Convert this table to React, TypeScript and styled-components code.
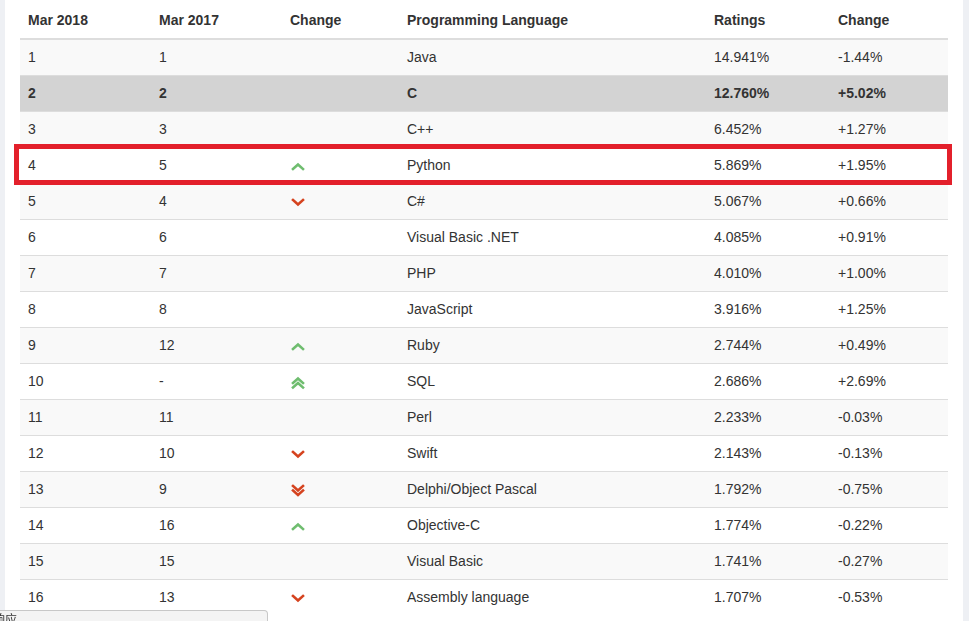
import styled, { createGlobalStyle } from 'styled-components'

const GlobalStyle = createGlobalStyle`
  html, body {
    margin: 0;
    padding: 0;
    background: #eef0f4;
    overflow: hidden;
  }
  body {
    font-family: "Liberation Sans", Arial, sans-serif;
    font-size: 14px;
    color: #333;
  }
`

type Trend = 'up' | 'up2' | 'down' | 'down2' | null

interface LangRow {
  now: string
  prev: string
  trend: Trend
  name: string
  rating: string
  change: string
}

const rows: LangRow[] = [
  { now: '1', prev: '1', trend: null, name: 'Java', rating: '14.941%', change: '-1.44%' },
  { now: '2', prev: '2', trend: null, name: 'C', rating: '12.760%', change: '+5.02%' },
  { now: '3', prev: '3', trend: null, name: 'C++', rating: '6.452%', change: '+1.27%' },
  { now: '4', prev: '5', trend: 'up', name: 'Python', rating: '5.869%', change: '+1.95%' },
  { now: '5', prev: '4', trend: 'down', name: 'C#', rating: '5.067%', change: '+0.66%' },
  { now: '6', prev: '6', trend: null, name: 'Visual Basic .NET', rating: '4.085%', change: '+0.91%' },
  { now: '7', prev: '7', trend: null, name: 'PHP', rating: '4.010%', change: '+1.00%' },
  { now: '8', prev: '8', trend: null, name: 'JavaScript', rating: '3.916%', change: '+1.25%' },
  { now: '9', prev: '12', trend: 'up', name: 'Ruby', rating: '2.744%', change: '+0.49%' },
  { now: '10', prev: '-', trend: 'up2', name: 'SQL', rating: '2.686%', change: '+2.69%' },
  { now: '11', prev: '11', trend: null, name: 'Perl', rating: '2.233%', change: '-0.03%' },
  { now: '12', prev: '10', trend: 'down', name: 'Swift', rating: '2.143%', change: '-0.13%' },
  { now: '13', prev: '9', trend: 'down2', name: 'Delphi/Object Pascal', rating: '1.792%', change: '-0.75%' },
  { now: '14', prev: '16', trend: 'up', name: 'Objective-C', rating: '1.774%', change: '-0.22%' },
  { now: '15', prev: '15', trend: null, name: 'Visual Basic', rating: '1.741%', change: '-0.27%' },
  { now: '16', prev: '13', trend: 'down', name: 'Assembly language', rating: '1.707%', change: '-0.53%' },
]

const Page = styled.div`
  display: flex;
  height: 621px;
  padding: 0 6px 0 5px;
  background: #eef0f4;
`

const Panel = styled.div`
  position: relative;
  width: 958px;
  flex: none;
  padding: 0 15px;
  box-sizing: border-box;
  background: #fff;
`

const Table = styled.table`
  width: 928px;
  border-collapse: collapse;
  border-spacing: 0;
  table-layout: fixed;
`

const Th = styled.th<{ $w: number }>`
  width: ${(p) => p.$w}px;
  box-sizing: border-box;
  padding: 10px 8px 8px;
  text-align: left;
  font-weight: bold;
  line-height: 20px;
  border-bottom: 2px solid #ddd;
  color: #333;
`

const Tr = styled.tr<{ $odd: boolean; $hl: boolean }>`
  background: ${(p) => (p.$hl ? '#d3d3d3' : p.$odd ? '#f9f9f9' : '#fff')};
  font-weight: ${(p) => (p.$hl ? 'bold' : 'normal')};
`

const Td = styled.td`
  padding: 8px;
  height: 19px;
  line-height: 19px;
  border-top: 1px solid #ddd;
  vertical-align: middle;
  color: #333;
`

const Mark = styled.div`
  position: absolute;
  left: 9px;
  top: 144px;
  width: 938px;
  height: 41px;
  box-sizing: border-box;
  border: 5px solid #e3202b;
  pointer-events: none;
`

const Status = styled.div`
  position: fixed;
  left: 0;
  bottom: -6px;
  width: 268px;
  height: 17px;
  box-sizing: border-box;
  background: #f4f4f4;
  border: 1px solid #c8c8c8;
  border-left: none;
  border-radius: 0 4px 0 0;
  font-family: "Noto Sans CJK SC", sans-serif;
  font-size: 12px;
  line-height: 15px;
  color: #333;
  overflow: hidden;
  white-space: nowrap;
  text-indent: -7px;
`

const IconWrap = styled.span`
  display: inline-flex;
  vertical-align: middle;
  margin-left: 1px;
`

const Chevron = ({ trend }: { trend: Trend }) => {
  if (!trend) return null
  const up = trend === 'up' || trend === 'up2'
  const double = trend === 'up2' || trend === 'down2'
  const color = up ? '#6fbd6f' : '#d5431f'
  const one = up ? 'M2 8 L7 3.5 L12 8' : 'M2 3 L7 7.5 L12 3'
  const two = up ? 'M2 12.5 L7 8 L12 12.5' : 'M2 7.5 L7 12 L12 7.5'
  return (
    <IconWrap>
      <svg width="14" height={double ? 15 : 11} viewBox={double ? '0 0 14 15' : '0 0 14 11'}>
        <path d={one} fill="none" stroke={color} strokeWidth="2.6" strokeLinecap="square" />
        {double && <path d={two} fill="none" stroke={color} strokeWidth="2.6" strokeLinecap="square" />}
      </svg>
    </IconWrap>
  )
}

const App = () => {
  return (
    <>
      <GlobalStyle />
      <Page>
        <Panel>
          <Table>
            <thead>
              <tr>
                <Th $w={131}>Mar 2018</Th>
                <Th $w={131}>Mar 2017</Th>
                <Th $w={117}>Change</Th>
                <Th $w={307}>Programming Language</Th>
                <Th $w={124}>Ratings</Th>
                <Th $w={118}>Change</Th>
              </tr>
            </thead>
            <tbody>
              {rows.map((r, i) => (
                <Tr key={r.now} $odd={i % 2 === 0} $hl={r.name === 'C'}>
                  <Td>{r.now}</Td>
                  <Td>{r.prev}</Td>
                  <Td>
                    <Chevron trend={r.trend} />
                  </Td>
                  <Td>{r.name}</Td>
                  <Td>{r.rating}</Td>
                  <Td>{r.change}</Td>
                </Tr>
              ))}
            </tbody>
          </Table>
          <Mark />
        </Panel>
      </Page>
      <Status>响应</Status>
    </>
  )
}

export default App
